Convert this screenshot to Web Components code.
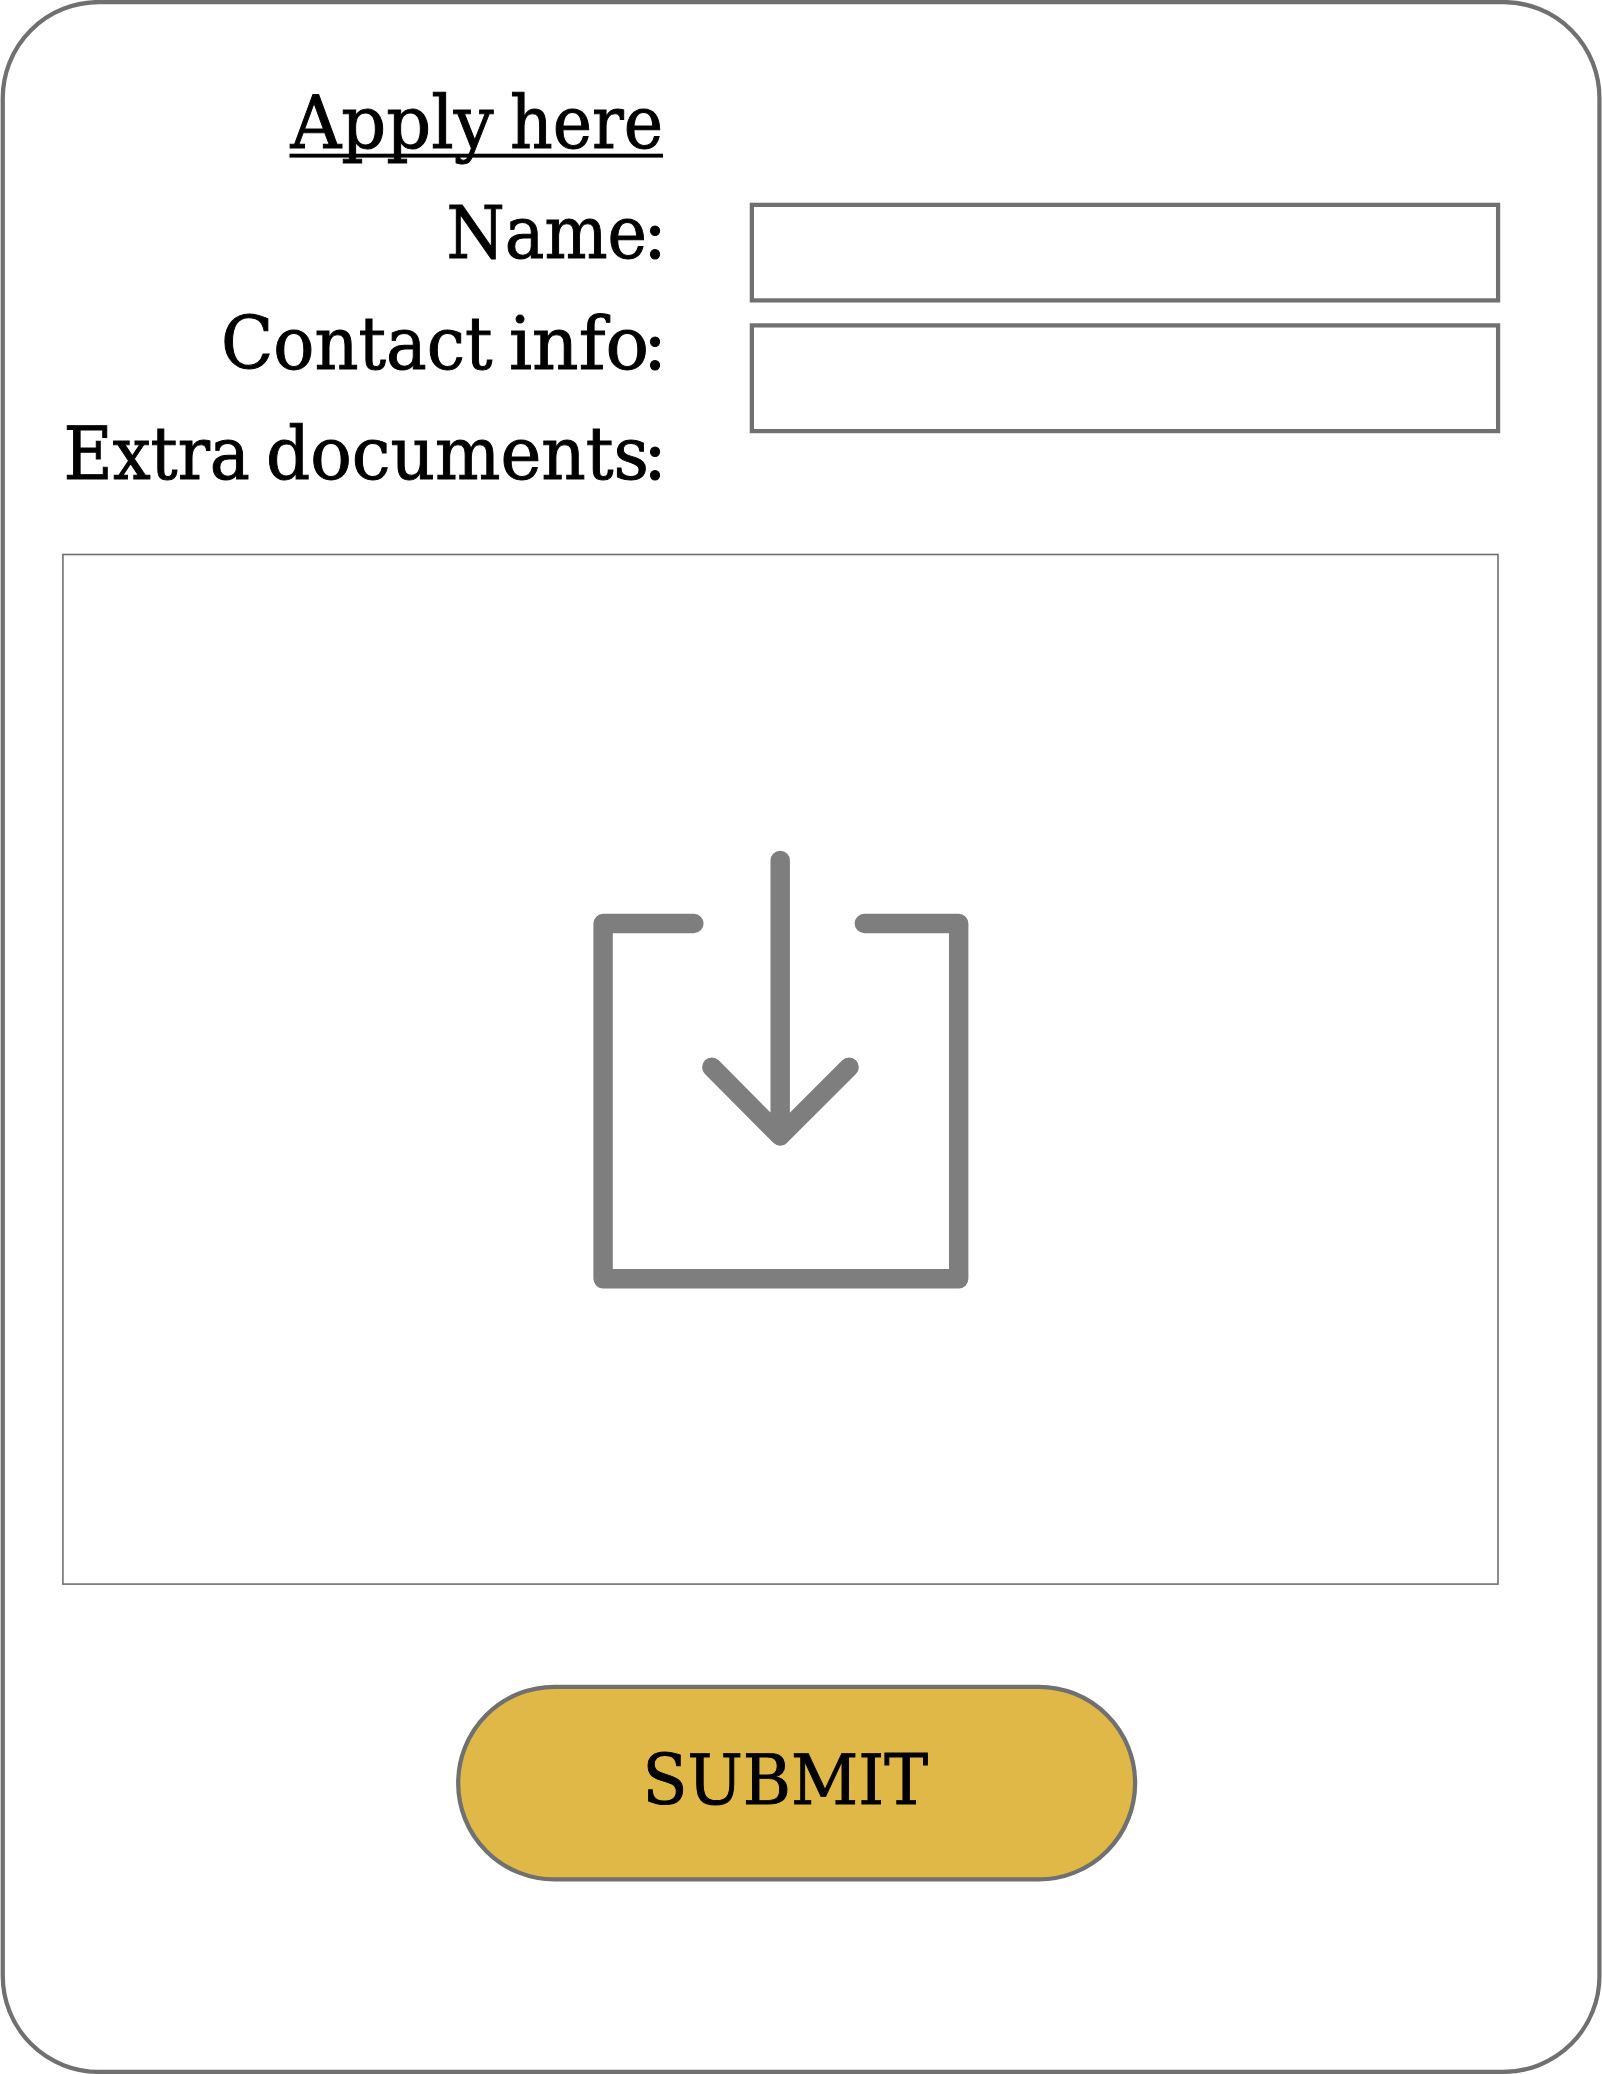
<!DOCTYPE html>
<html lang="en">
<head>
<meta charset="utf-8">
<title>Apply here</title>
<style>
html,body{margin:0;padding:0;background:#fff}
body{width:1602px;height:2074px;overflow:hidden;font-family:"DejaVu Serif",serif;color:#000}
</style>
</head>
<body>
<apply-form></apply-form>
<script>
// Single line of text. "parts" lists text|x|advance for each fitted run, separated by ";".
// A leading "_" in a run stands for the space before the word.
class FitText extends HTMLElement {
  connectedCallback() {
    const g = n => this.getAttribute(n);
    const w = +g('width'), h = +g('height'), y = +g('baseline');
    const runs = g('parts').split(';').map(p => p.split('|'));
    const x0 = +runs[0][1];
    const line = this.hasAttribute('underlined')
      ? `<rect x="${x0 - 1}" y="${y + 5.7}" width="${w - x0 + 1}" height="3.9"/>` : '';
    const spans = runs.map(([t, x, len]) =>
      `${t[0] === '_' ? ' ' : ''}<tspan x="${x}" textLength="${len}" lengthAdjust="spacingAndGlyphs">${t.replace('_', '')}</tspan>`).join('');
    this.attachShadow({mode: 'open'}).innerHTML = `
      <style>:host{display:block;width:${w}px;height:${h}px}svg{display:block;overflow:visible}
      text{font-family:"DejaVu Serif Condensed","DejaVu Serif",serif;font-stretch:condensed;font-size:${g('size')}px;stroke:#000;stroke-width:.9px}</style>
      <svg width="${w}" height="${h}" fill="#000"><text y="${y}">${spans}</text>${line}</svg>`;
  }
}
customElements.define('fit-text', FitText);

// Outlined box; "edges" holds the stroke centre line: left top right bottom.
class OutlineBox extends HTMLElement {
  connectedCallback() {
    const g = (n, d) => this.getAttribute(n) || d;
    const [l, t, r, b] = g('edges').split(' ').map(Number);
    this.attachShadow({mode: 'open'}).innerHTML = `
      <style>:host{display:grid;width:${g('width')}px;height:${g('height')}px}
      svg,.in{grid-area:1/1;width:100%;height:100%;display:block;overflow:visible;min-width:0;min-height:0}</style>
      <svg><rect x="${l}" y="${t}" width="${r - l}" height="${b - t}" rx="${g('radius', 0)}"
        fill="${g('fill', 'none')}" stroke="#707070" stroke-width="${g('stroke', 4.25)}"/></svg>
      <div class="in"><slot></slot></div>`;
  }
}
customElements.define('outline-box', OutlineBox);

class DropIcon extends HTMLElement {
  connectedCallback() {
    this.attachShadow({mode: 'open'}).innerHTML = `
      <style>:host{display:block}svg{display:block}</style>
      <svg width="376" height="441" viewBox="592.5 849 376 441" fill="none" stroke="#7e7e7e" stroke-width="19.4" stroke-linecap="round" stroke-linejoin="round">
        <path d="M693.4 923.5H602.6V1278.8H958.2V923.5H863.8"/>
        <path d="M779.7 860.4V1136M711.3 1067.2L779.7 1136L848.6 1067.2"/>
      </svg>`;
  }
}
customElements.define('drop-icon', DropIcon);

class ApplyForm extends HTMLElement {
  connectedCallback() {
    this.attachShadow({mode: 'open'}).innerHTML = `
      <style>
      :host{display:block}
      .page{display:flex;flex-direction:column;height:2074px}
      .top{display:flex;gap:85px;padding:70px 0 0 62px;height:482px}
      .labels{display:flex;flex-direction:column;width:602px}
      .fields{display:flex;flex-direction:column;gap:20px;padding-top:132px}
      .drop{padding-left:62px}
      .center{display:flex;padding:297px 0 0 530.5px}
      .submit{padding:99px 0 0 456px}
      .label{padding:70px 0 0 191px}
      </style>
      <outline-box width="1602" height="2074" edges="2.75 2.05 1599.45 2071.9" radius="96">
        <div class="page">
          <div class="top">
            <div class="labels">
              <fit-text width="601" height="110" baseline="78" size="73" parts="Apply|228.5|203;_here|448|153" underlined></fit-text>
              <fit-text width="602" height="111" baseline="78.3" size="73" parts="Name|384.5|200.5;:|581|24"></fit-text>
              <fit-text width="602" height="110" baseline="78" size="73" parts="Contact|159|271.5;_info|447|140;:|581|24"></fit-text>
              <fit-text width="602" height="111" baseline="78.3" size="73" parts="Extra|1.5|186.5;_documents|204|383;:|581|24"></fit-text>
            </div>
            <div class="fields">
              <outline-box width="752" height="101" edges="2.85 2.85 749.1 98.4"></outline-box>
              <outline-box width="752" height="111" edges="2.85 2.4 749.1 108.1"></outline-box>
            </div>
          </div>
          <div class="drop">
            <outline-box width="1437" height="1034" edges="0.9 2.5 1436 1032.1" stroke="1.6">
              <div class="center"><drop-icon></drop-icon></div>
            </outline-box>
          </div>
          <div class="submit">
            <outline-box width="682" height="198" edges="2.2 1.8 679.1 194.4" radius="96.2" fill="#e0b848">
              <div class="label"><fit-text width="282" height="60" baseline="49" size="69.5" parts="SUBMIT|-4.5|285.5"></fit-text></div>
            </outline-box>
          </div>
        </div>
      </outline-box>`;
  }
}
customElements.define('apply-form', ApplyForm);
</script>
</body>
</html>
